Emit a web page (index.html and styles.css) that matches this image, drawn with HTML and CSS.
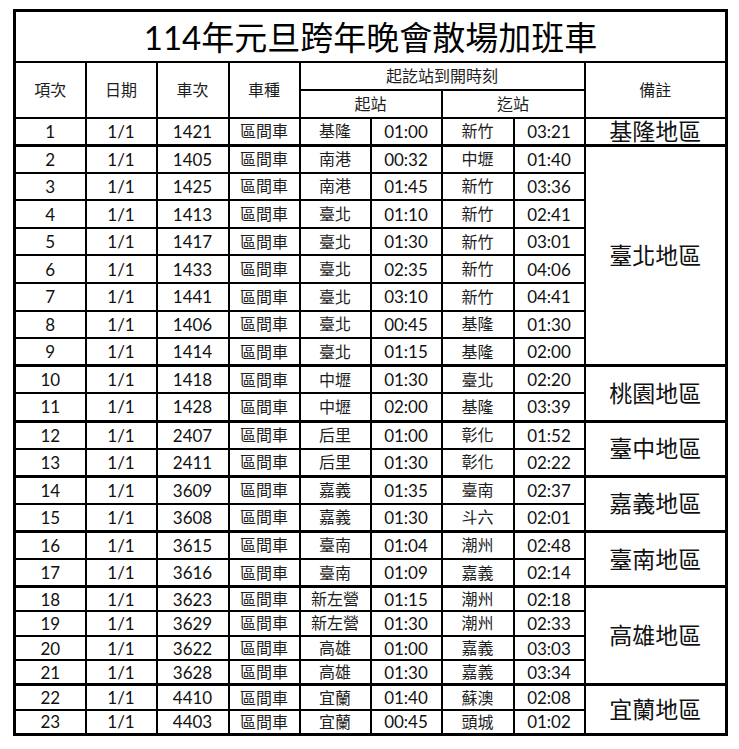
FILE: index.html
```html
<!DOCTYPE html>
<html lang="zh-Hant">
<head>
<meta charset="utf-8">
<title>114年元旦跨年晚會散場加班車</title>
<link rel="stylesheet" href="styles.css">
</head>
<body>
<table class="sched">
  <colgroup>
    <col class="c-n"><col class="c-d"><col class="c-t"><col class="c-k">
    <col class="c-s"><col class="c-st"><col class="c-e"><col class="c-et">
    <col class="c-r">
  </colgroup>
  <tr class="title-row"><td colspan="9" class="title">114年元旦跨年晚會散場加班車</td></tr>
  <tr class="h1">
    <td rowspan="2">項次</td><td rowspan="2">日期</td><td rowspan="2">車次</td><td rowspan="2">車種</td>
    <td colspan="4">起訖站到開時刻</td>
    <td rowspan="2">備註</td>
  </tr>
  <tr class="h2"><td colspan="2">起站</td><td colspan="2">迄站</td></tr>

  <tr class="r"><td>1</td><td>1/1</td><td>1421</td><td>區間車</td><td>基隆</td><td>01:00</td><td>新竹</td><td>03:21</td><td class="area">基隆地區</td></tr>

  <tr class="r g"><td>2</td><td>1/1</td><td>1405</td><td>區間車</td><td>南港</td><td>00:32</td><td>中壢</td><td>01:40</td><td class="area" rowspan="8">臺北地區</td></tr>
  <tr class="r"><td>3</td><td>1/1</td><td>1425</td><td>區間車</td><td>南港</td><td>01:45</td><td>新竹</td><td>03:36</td></tr>
  <tr class="r"><td>4</td><td>1/1</td><td>1413</td><td>區間車</td><td>臺北</td><td>01:10</td><td>新竹</td><td>02:41</td></tr>
  <tr class="r"><td>5</td><td>1/1</td><td>1417</td><td>區間車</td><td>臺北</td><td>01:30</td><td>新竹</td><td>03:01</td></tr>
  <tr class="r"><td>6</td><td>1/1</td><td>1433</td><td>區間車</td><td>臺北</td><td>02:35</td><td>新竹</td><td>04:06</td></tr>
  <tr class="r"><td>7</td><td>1/1</td><td>1441</td><td>區間車</td><td>臺北</td><td>03:10</td><td>新竹</td><td>04:41</td></tr>
  <tr class="r"><td>8</td><td>1/1</td><td>1406</td><td>區間車</td><td>臺北</td><td>00:45</td><td>基隆</td><td>01:30</td></tr>
  <tr class="r"><td>9</td><td>1/1</td><td>1414</td><td>區間車</td><td>臺北</td><td>01:15</td><td>基隆</td><td>02:00</td></tr>

  <tr class="r g"><td>10</td><td>1/1</td><td>1418</td><td>區間車</td><td>中壢</td><td>01:30</td><td>臺北</td><td>02:20</td><td class="area" rowspan="2">桃園地區</td></tr>
  <tr class="r"><td>11</td><td>1/1</td><td>1428</td><td>區間車</td><td>中壢</td><td>02:00</td><td>基隆</td><td>03:39</td></tr>

  <tr class="r g"><td>12</td><td>1/1</td><td>2407</td><td>區間車</td><td>后里</td><td>01:00</td><td>彰化</td><td>01:52</td><td class="area" rowspan="2">臺中地區</td></tr>
  <tr class="r"><td>13</td><td>1/1</td><td>2411</td><td>區間車</td><td>后里</td><td>01:30</td><td>彰化</td><td>02:22</td></tr>

  <tr class="r g"><td>14</td><td>1/1</td><td>3609</td><td>區間車</td><td>嘉義</td><td>01:35</td><td>臺南</td><td>02:37</td><td class="area" rowspan="2">嘉義地區</td></tr>
  <tr class="r"><td>15</td><td>1/1</td><td>3608</td><td>區間車</td><td>嘉義</td><td>01:30</td><td>斗六</td><td>02:01</td></tr>

  <tr class="r g"><td>16</td><td>1/1</td><td>3615</td><td>區間車</td><td>臺南</td><td>01:04</td><td>潮州</td><td>02:48</td><td class="area" rowspan="2">臺南地區</td></tr>
  <tr class="r"><td>17</td><td>1/1</td><td>3616</td><td>區間車</td><td>臺南</td><td>01:09</td><td>嘉義</td><td>02:14</td></tr>

  <tr class="s g"><td>18</td><td>1/1</td><td>3623</td><td>區間車</td><td>新左營</td><td>01:15</td><td>潮州</td><td>02:18</td><td class="area" rowspan="4">高雄地區</td></tr>
  <tr class="s"><td>19</td><td>1/1</td><td>3629</td><td>區間車</td><td>新左營</td><td>01:30</td><td>潮州</td><td>02:33</td></tr>
  <tr class="s"><td>20</td><td>1/1</td><td>3622</td><td>區間車</td><td>高雄</td><td>01:00</td><td>嘉義</td><td>03:03</td></tr>
  <tr class="s"><td>21</td><td>1/1</td><td>3628</td><td>區間車</td><td>高雄</td><td>01:30</td><td>嘉義</td><td>03:34</td></tr>

  <tr class="s g"><td>22</td><td>1/1</td><td>4410</td><td>區間車</td><td>宜蘭</td><td>01:40</td><td>蘇澳</td><td>02:08</td><td class="area" rowspan="2">宜蘭地區</td></tr>
  <tr class="s"><td>23</td><td>1/1</td><td>4403</td><td>區間車</td><td>宜蘭</td><td>00:45</td><td>頭城</td><td>01:02</td></tr>
</table>
</body>
</html>
```

FILE: styles.css
```css
html, body {
  margin: 0;
  padding: 0;
  background: #ffffff;
}

body {
  padding: 9px 0 0 13px;
  font-family: Lato, "Noto Sans CJK TC", sans-serif;
  color: #1e1e1e;
}

.sched {
  border-collapse: collapse;
  table-layout: fixed;
  width: 715px;
  border: 3px solid #000;
}

.c-n { width: 71px; }
.c-d { width: 71px; }
.c-t { width: 72px; }
.c-k { width: 71px; }
.c-s { width: 71px; }
.c-st { width: 71px; }
.c-e { width: 72px; }
.c-et { width: 71px; }
.c-r { width: 142px; }

.sched td {
  border: 2px solid #000;
  padding: 0;
  text-align: center;
  vertical-align: middle;
  font-size: 16px;
  line-height: 1;
  white-space: nowrap;
}

.title-row { height: 51px; }
.sched td.title {
  font-size: 33px;
  color: #000;
  padding-top: 2px;
}

.h1 { height: 28px; }
.h1 td[colspan="4"] { border-bottom-width: 1px; }
.h2 { height: 28px; }

.r { height: 27.6px; }
.s { height: 24.6px; }

/* numeric cells: item no., date, train no., departure and arrival times */
.r td:nth-child(-n+3),
.r td:nth-child(6),
.r td:nth-child(8),
.s td:nth-child(-n+3),
.s td:nth-child(6),
.s td:nth-child(8) {
  font-size: 17px;
  color: #111;
}

.sched tr.g td { border-top-width: 3px; }

.sched td.area {
  font-size: 23px;
  color: #111;
}
```
